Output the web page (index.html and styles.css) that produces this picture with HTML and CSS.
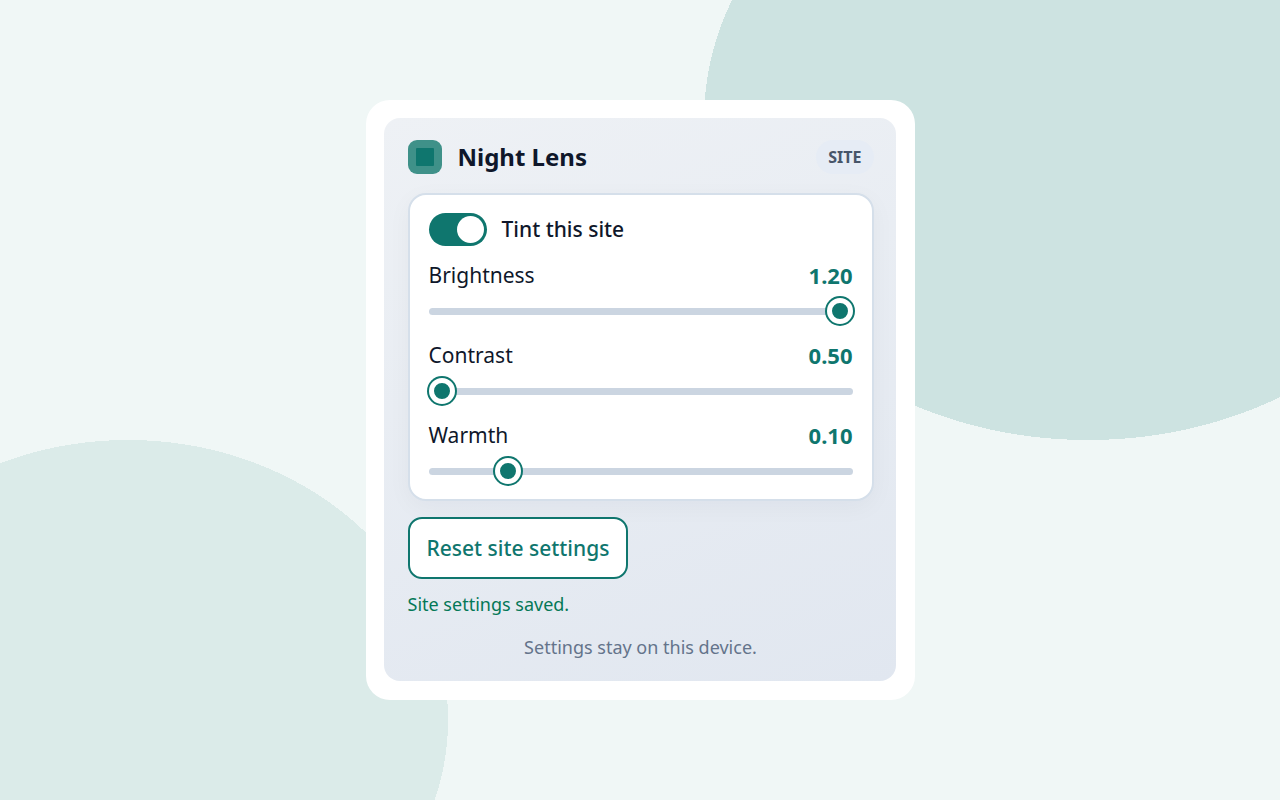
FILE: index.html
```html
<!DOCTYPE html>
<html lang="en">
<head>
    <meta charset="UTF-8">
    <meta name="viewport" content="width=device-width, initial-scale=1.0">
    <title>Night Lens</title>
    <link rel="stylesheet" href="styles.css">
</head>
<body>
    <main class="frame">
        <div class="popup">
            <header class="header">
                <svg class="logo" viewBox="0 0 34 34" aria-hidden="true">
                    <rect width="34" height="34" rx="9" fill="#3f9189"/>
                    <rect x="8" y="8" width="18" height="18" rx="1" fill="#0f766e"/>
                </svg>
                <h1>Night Lens</h1>
                <span class="badge">SITE</span>
            </header>

            <section class="card">
                <label class="toggle">
                    <input type="checkbox" checked>
                    <span>Tint this site</span>
                </label>

                <div class="control">
                    <label for="brightness">Brightness</label>
                    <output id="brightnessValue" for="brightness">1.20</output>
                    <input type="range" id="brightness" min="0.5" max="1.2" step="0.05" value="1.2">
                </div>

                <div class="control">
                    <label for="contrast">Contrast</label>
                    <output id="contrastValue" for="contrast">0.50</output>
                    <input type="range" id="contrast" min="0.5" max="1.5" step="0.05" value="0.5">
                </div>

                <div class="control">
                    <label for="warmth">Warmth</label>
                    <output id="warmthValue" for="warmth">0.10</output>
                    <input type="range" id="warmth" min="0" max="0.6" step="0.05" value="0.1">
                </div>
            </section>

            <button type="button" class="reset">Reset site settings</button>
            <p class="status" role="status">Site settings saved.</p>
            <p class="note">Settings stay on this device.</p>
        </div>
    </main>

    <script>
        // Keep the numbers in step with the sliders
        document.querySelectorAll("input[type=range]").forEach(slider => {
            slider.addEventListener("input", () => {
                document.getElementById(slider.id + "Value").textContent = Number(slider.value).toFixed(2);
            });
        });
    </script>
</body>
</html>
```
FILE: styles.css
```css
* {
    box-sizing: border-box;
}
body {
    display: flex;
    align-items: center;
    justify-content: center;
    min-height: 100vh;
    margin: 0;
    /* Two soft blobs, top right and bottom left */
    background:
        radial-gradient(ellipse 30% 40% at 85% 15%, #cde3e1 100%, transparent 100%),
        radial-gradient(ellipse 25% 35% at 10% 90%, #dbebe9 100%, transparent 100%),
        #f0f7f6;
    color: #0f172a;
    font-family: "Segoe UI", "Noto Sans", sans-serif;
    font-size: 21px;
}
.frame {
    width: 100%;
    max-width: 549px;
    padding: 18px 19px 19px 18px;
    border-radius: 24px;
    background-color: white;
}
.popup {
    padding: 22px 22px 21px 24px;
    border-radius: 16px;
    background: linear-gradient(160deg, #eef1f5, #e1e7f0);
}
.header {
    display: flex;
    align-items: center;
    gap: 16px;
    margin-bottom: 19px;
}
.logo {
    width: 34px;
    height: 34px;
}
h1 {
    margin: 0;
    font-size: 24px;
    font-weight: 700;
    line-height: 34px;
}
.badge {
    margin-left: auto;
    padding: 0 12px;
    border-radius: 17px;
    background-color: #e6ecf5;
    color: #475569;
    font-size: 16px;
    font-weight: 700;
    line-height: 34px;
}
.card {
    display: flex;
    flex-direction: column;
    gap: 14px;
    padding: 18px 19px 13px;
    border: 2px solid #d5dfea;
    border-radius: 18px;
    background-color: white;
    box-shadow: 0 6px 24px rgba(15, 23, 42, 0.04);
}
.toggle {
    display: flex;
    align-items: center;
    gap: 15px;
    font-weight: 500;
    line-height: 33px;
}
.toggle input {
    appearance: none;
    display: flex;
    width: 58px;
    height: 33px;
    margin: 0;
    padding: 3px;
    border-radius: 17px;
    background-color: #cbd5e1;
}
.toggle input::before {
    content: "";
    width: 27px;
    height: 27px;
    border-radius: 50%;
    background-color: white;
}
.toggle input:checked {
    justify-content: flex-end;
    background-color: #0f766e;
}
.control {
    display: grid;
    grid-template-columns: 1fr auto;
    row-gap: 6px;
    line-height: 30px;
}
.control output {
    color: #0f766e;
    font-size: 22px;
    font-weight: 700;
}
.control input {
    appearance: none;
    grid-column: 1 / -1;
    width: 100%;
    height: 30px;
    margin: 0;
    background: transparent;
}
.control input::-webkit-slider-runnable-track {
    height: 7px;
    border-radius: 4px;
    background-color: #cbd5e1;
}
.control input::-webkit-slider-thumb {
    appearance: none;
    width: 26px;
    height: 26px;
    margin-top: -10px;
    border: 5px solid white;
    border-radius: 50%;
    background-color: #0f766e;
    box-shadow: 0 0 0 2px #0f766e;
}
.reset {
    display: block;
    margin-top: 16px;
    padding: 14px 17px;
    border: 2px solid #0f766e;
    border-radius: 14px;
    background-color: white;
    color: #0f766e;
    font-family: inherit;
    font-size: 21px;
    font-weight: 500;
    line-height: 30px;
    cursor: pointer;
}
.status,
.note {
    margin: 12px 0 0;
    font-size: 18px;
    line-height: 26px;
}
.status {
    color: #047857;
}
.note {
    margin-top: 17px;
    color: #64748b;
    text-align: center;
}
```
